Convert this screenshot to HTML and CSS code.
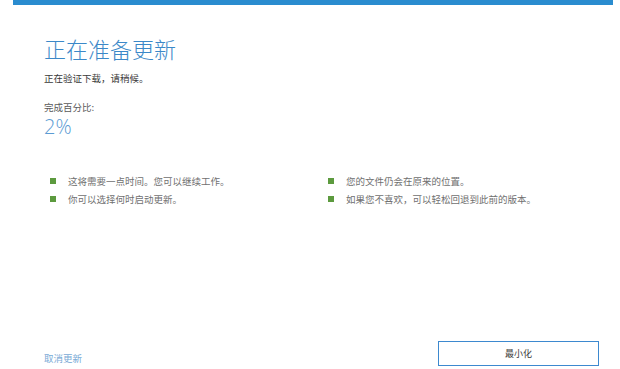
FILE: index.html
```html
<!DOCTYPE html>
<html lang="zh-CN">
<head>
<meta charset="utf-8">
<title>正在准备更新</title>
<link rel="stylesheet" href="styles.css">
</head>
<body>
<div class="page">
  <div class="bar"></div>
  <main class="main">
    <h1 class="title">正在准备更新</h1>
    <p class="sub">正在验证下载，请稍候。</p>
    <div class="progress">
      <div class="label">完成百分比:</div>
      <div class="value">2%</div>
    </div>
    <ul class="notes">
      <li><span class="sq"></span>这将需要一点时间。您可以继续工作。</li>
      <li><span class="sq"></span>您的文件仍会在原来的位置。</li>
      <li><span class="sq"></span>你可以选择何时启动更新。</li>
      <li><span class="sq"></span>如果您不喜欢，可以轻松回退到此前的版本。</li>
    </ul>
    <div class="footer">
      <a class="cancel" href="#">取消更新</a>
      <button class="btn" type="button">最小化</button>
    </div>
  </main>
</div>
</body>
</html>
```
FILE: styles.css
```css
html, body {
  margin: 0;
  padding: 0;
  background: #ffffff;
}
body {
  font-family: "Noto Sans CJK SC", "Noto Sans", sans-serif;
  color: #333;
}
.page {
  height: 369px;
  display: flex;
  flex-direction: column;
}
.bar {
  height: 5px;
  margin: 0 7px 0 13px;
  background: #2a8ccf;
}
.main {
  flex: 1;
  display: flex;
  flex-direction: column;
  padding: 0 21px 3px 44px;
}
.title {
  margin: 30px 0 0;
  font-size: 22px;
  line-height: 26px;
  font-weight: 300;
  color: #3b88c8;
}
.sub {
  margin: 10px 0 0;
  font-size: 9.5px;
  line-height: 14px;
  font-weight: 400;
  color: #3a3a3a;
}
.progress {
  margin-top: 15px;
}
.label {
  font-size: 9.5px;
  line-height: 14px;
  color: #5a5a5a;
}
.value {
  margin-top: 1px;
  font-family: "Open Sans", "Noto Sans", sans-serif;
  font-size: 20px;
  line-height: 24px;
  font-weight: 300;
  color: #5b9bd3;
}
.notes {
  list-style: none;
  margin: 33px 0 0;
  padding: 0 0 0 6px;
  display: grid;
  grid-template-columns: 278px 1fr;
}
.notes li {
  display: flex;
  align-items: center;
  gap: 12px;
  font-size: 9.5px;
  line-height: 18px;
  color: #707070;
}
.sq {
  width: 6px;
  height: 6px;
  background: #5c9a3e;
  flex: none;
}
.footer {
  margin-top: auto;
  display: flex;
  justify-content: space-between;
  align-items: flex-end;
}
.cancel {
  margin-bottom: 1px;
  font-size: 9.5px;
  line-height: 14px;
  color: #7aaad6;
  text-decoration: none;
}
.btn {
  width: 161px;
  height: 25px;
  margin: 0;
  padding: 0;
  border: 1.5px solid #3d89cf;
  background: #fff;
  font-family: inherit;
  font-size: 9px;
  font-weight: 400;
  color: #3a3a3a;
}
```
